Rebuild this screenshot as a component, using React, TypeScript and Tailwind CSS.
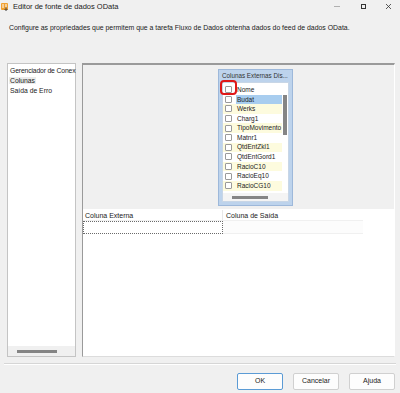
import React from "react";

const columns = [
  { name: "Nome", tone: "white" },
  { name: "Budat", tone: "selected" },
  { name: "Werks", tone: "yellow" },
  { name: "Charg1", tone: "white" },
  { name: "TipoMovimento", tone: "yellow" },
  { name: "Matnr1", tone: "white" },
  { name: "QtdEntZkl1", tone: "yellow" },
  { name: "QtdEntGord1", tone: "white" },
  { name: "RacioC10", tone: "yellow" },
  { name: "RacioEq10", tone: "white" },
  { name: "RacioCG10", tone: "yellow" },
];

function TitleIcon() {
  return (
    <svg width="8" height="8" viewBox="0 0 8 8">
      <rect x="0" y="0" width="7" height="7" rx="1" fill="#f0a030" />
      <path d="M2 1v4M5 1v4" stroke="#fff" strokeWidth="1" />
      <path d="M5 4v3.5M3.5 6l1.5 1.5L6.5 6" stroke="#333" strokeWidth="0.8" fill="none" />
    </svg>
  );
}

export default function App() {
  return (
    <div
      className="w-[400px] h-[393px] bg-[#f0f0f0] flex flex-col text-[#1a1a1a] overflow-hidden"
      style={{ fontFamily: '"Liberation Sans", Arial, sans-serif' }}
    >
      {/* Title bar */}
      <div className="h-[13px] flex items-center pl-[1px] pr-[9px]">
        <TitleIcon />
        <span className="ml-[4px] text-[7.5px] leading-none">Editor de fonte de dados OData</span>
        <div className="ml-auto flex items-center">
          <div className="w-[6px] h-[1px] bg-[#b0b0b0]" />
          <div className="ml-[21px] w-[5px] h-[5px] border border-[#333]" />
          <svg className="ml-[20px]" width="5" height="5" viewBox="0 0 5 5">
            <path d="M0 0L5 5M5 0L0 5" stroke="#333" strokeWidth="0.8" />
          </svg>
        </div>
      </div>

      {/* Description */}
      <p className="mt-[10px] pl-[9px] text-[6.9px] leading-[9px] whitespace-nowrap">
        Configure as propriedades que permitem que a tarefa Fluxo de Dados obtenha dados do feed de dados OData.
      </p>

      {/* Main area */}
      <div className="mt-[31px] flex pl-[7px] pr-[5px] gap-[6px] h-[294px]">
        {/* Left nav */}
        <div className="w-[69px] bg-white border border-[#c4c4c4] flex flex-col text-[6.8px] leading-[10px]">
          <div className="pt-[2px] pl-[2px] whitespace-nowrap tracking-[-0.15px]">Gerenciador de Conex</div>
          <div className="pl-[1px]">
            <span className="bg-[#ececec] px-[1px]">Colunas</span>
          </div>
          <div className="pl-[2px]">Saída de Erro</div>
          <div className="mt-auto h-[10px] bg-[#f0f0f0] flex items-center pl-[9px]">
            <div className="w-[40px] h-[3px] bg-[#858585]" />
          </div>
        </div>

        {/* Right panel */}
        <div className="flex-1 flex flex-col border-t-2 border-l border-[#9a9a9a] border-r border-r-white border-b border-b-[#dcdcdc]">
          {/* Designer surface */}
          <div className="h-[144px] bg-[#f0f0f0] pt-[4px] pl-[135px]">
            <div className="relative w-[75px] h-[137px] bg-[#bdd3ec] border border-[#9db8da] flex flex-col px-[3px]">
              <div className="h-[12px] text-[6.3px] leading-[12px] text-[#333] whitespace-nowrap">
                Colunas Externas Dis...
              </div>
              <div className="flex-1 bg-white flex flex-col mb-[3px] border border-[#c8d6e6]">
                <div className="flex flex-1 min-h-0">
                  <div className="flex-1 flex flex-col pt-[2px]">
                    {columns.map((c) => (
                      <div
                        key={c.name}
                        className={
                          "h-[9.6px] flex items-center pl-[2px] " +
                          (c.tone === "yellow" ? "bg-[#fdfbde]" : "bg-white")
                        }
                      >
                        <div className="w-[7px] h-[7px] border border-[#9a9a9a] bg-white shrink-0 rounded-[1px]" />
                        <div
                          className={
                            "ml-[4px] flex-1 h-full flex items-center pl-[1px] text-[6.5px] whitespace-nowrap overflow-hidden " +
                            (c.tone === "selected" ? "bg-[#a8cdef]" : "")
                          }
                        >
                          {c.name}
                        </div>
                      </div>
                    ))}
                  </div>
                  <div className="w-[6px] flex flex-col items-center pt-[12px]">
                    <div className="w-[4px] h-[40px] bg-[#858585]" />
                  </div>
                </div>
                <div className="h-[8px] flex items-center pl-[9px] bg-[#f4f4f4]">
                  <div className="w-[36px] h-[3px] bg-[#858585]" />
                </div>
              </div>
              {/* red annotation */}
              <div className="absolute left-[1px] top-[10px] w-[17px] h-[15px] border-2 border-[#e01818] rounded-[4px]" />
            </div>
          </div>

          {/* Grid */}
          <div className="flex-1 bg-white pt-[1px]">
            <div className="flex text-[7px] h-[11px] leading-[11px] border-b border-[#f0f0f0] w-[280px]">
              <div className="w-[140px] pl-[2px] border-r border-[#e8e8e8]">Coluna Externa</div>
              <div className="w-[140px] pl-[3px]">Coluna de Saída</div>
            </div>
            <div className="flex h-[13px] w-[280px]">
              <div className="w-[140px] border border-dotted border-[#6a6a6a]" />
              <div className="w-[140px] bg-[#fcfcfc] border-b border-[#f0f0f0]" />
            </div>
          </div>
        </div>
      </div>

      {/* Separator */}
      <div className="mt-[6px] mx-[4px] h-[2px] border-t border-[#d6d6d6] border-b border-b-white" />

      {/* Buttons */}
      <div className="mt-[8px] flex justify-end gap-[10px] pr-[5px]">
        <button className="w-[46px] h-[17px] bg-[#fdfdfd] border border-[#5b9bd5] rounded-[2px] text-[7px]">
          OK
        </button>
        <button className="w-[46px] h-[17px] bg-[#fdfdfd] border border-[#d0d0d0] rounded-[2px] text-[7px]">
          Cancelar
        </button>
        <button className="w-[46px] h-[17px] bg-[#fdfdfd] border border-[#d0d0d0] rounded-[2px] text-[7px]">
          Ajuda
        </button>
      </div>
    </div>
  );
}
